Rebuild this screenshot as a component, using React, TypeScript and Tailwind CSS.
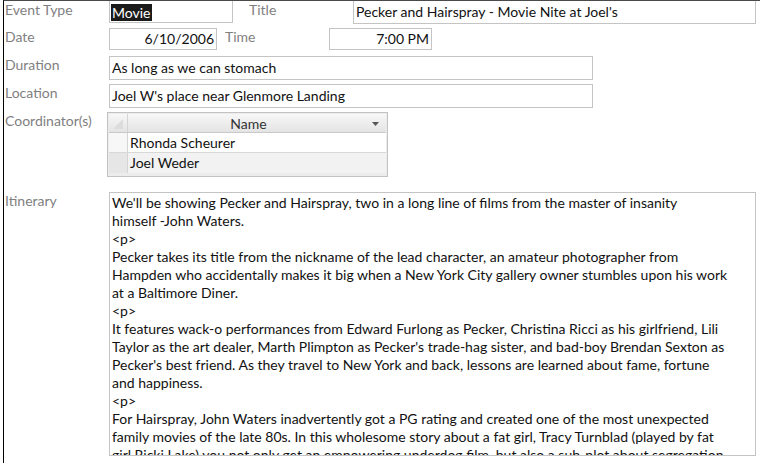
const itinerary = [
  "We'll be showing Pecker and Hairspray, two in a long line of films from the master of insanity",
  "himself -John Waters.",
  "<p>",
  "Pecker takes its title from the nickname of the lead character, an amateur photographer from",
  "Hampden who accidentally makes it big when a New York City gallery owner stumbles upon his work",
  "at a Baltimore Diner.",
  "<p>",
  "It features wack-o performances from Edward Furlong as Pecker, Christina Ricci as his girlfriend, Lili",
  "Taylor as the art dealer, Marth Plimpton as Pecker's trade-hag sister, and bad-boy Brendan Sexton as",
  "Pecker's best friend. As they travel to New York and back, lessons are learned about fame, fortune",
  "and happiness.",
  "<p>",
  "For Hairspray, John Waters inadvertently got a PG rating and created one of the most unexpected",
  "family movies of the late 80s. In this wholesome story about a fat girl, Tracy Turnblad (played by fat",
  "girl Ricki Lake) you not only get an empowering underdog film, but also a sub-plot about segregation",
];

function Label({ children, w = "w-[105px]" }: { children: React.ReactNode; w?: string }) {
  return <div className={`${w} shrink-0 pl-[1px] leading-[18px] text-[#7f7f7f]`}>{children}</div>;
}

export default function App() {
  return (
    <div
      className="h-[463px] w-[760px] overflow-hidden bg-white pl-[3px] text-[14px] text-[#111]"
      style={{ fontFamily: "Lato, 'Open Sans', sans-serif" }}
    >
      <div className="flex h-full flex-col border-l border-t border-l-black border-t-[#4a4a4a]">
        {/* event type / title */}
        <div className="flex h-[23px] items-start">
          <Label>Event Type</Label>
          <div className="h-[22px] w-[124px] border border-t-0 border-[#c4c4c4] px-[1px] pt-[1px]">
            <span className="bg-[#1b1b1b] px-[1px] leading-[18px] text-white">Movie</span>
          </div>
          <div className="w-[15px]" />
          <Label>Title</Label>
          <div className="h-[23px] w-[403px] border border-t-0 border-[#c4c4c4] px-[2px] pt-[1px] leading-[20px]">
            Pecker and Hairspray - Movie Nite at Joel's
          </div>
        </div>

        {/* date / time */}
        <div className="mt-[4px] flex h-[22px] items-start">
          <Label>Date</Label>
          <div className="h-[22px] w-[108px] border border-[#c4c4c4] px-[2px] text-right leading-[20px]">6/10/2006</div>
          <div className="w-[7px]" />
          <Label>Time</Label>
          <div className="h-[22px] w-[103px] border border-[#c4c4c4] px-[2px] text-right leading-[20px]">7:00 PM</div>
        </div>

        <div className="mt-[6px] flex h-[24px] items-start">
          <Label>Duration</Label>
          <div className="h-[24px] w-[484px] border border-[#c4c4c4] px-[2px] leading-[22px]">As long as we can stomach</div>
        </div>

        <div className="mt-[4px] flex h-[24px] items-start">
          <Label>Location</Label>
          <div className="h-[24px] w-[484px] border border-[#c4c4c4] px-[2px] leading-[22px]">
            Joel W's place near Glenmore Landing
          </div>
        </div>

        {/* coordinators datasheet */}
        <div className="mt-[4px] flex items-start">
          <Label w="w-[103px]">Coordinator(s)</Label>
          <div className="w-[281px] border border-[#c2c2c2] bg-[#ececec] p-[1px]">
            <div className="flex h-[19px] border-b border-[#c9c9c9] bg-gradient-to-b from-[#f7f7f7] to-[#e4e4e4] text-[#333]">
              <div className="relative w-[19px] border-r border-[#d4d4d4]">
                <svg width="12" height="12" className="absolute left-[3px] top-[4px]" viewBox="0 0 12 12">
                  <path d="M11 1 L11 11 L1 11 Z" fill="#dcdcdc" />
                </svg>
              </div>
              <div className="relative flex-1 pr-[17px] text-center leading-[19px]">
                Name
                <svg width="7" height="4" className="absolute right-[7px] top-[8px]" viewBox="0 0 7 4">
                  <path d="M0 0 H7 L3.5 4 Z" fill="#555" />
                </svg>
              </div>
            </div>
            <div className="flex h-[20px] border-b border-[#d8d8d8] bg-white">
              <div className="w-[19px] border-r border-[#d4d4d4] bg-[#f7f7f7]" />
              <div className="flex-1 pl-[2px] leading-[19px]">Rhonda Scheurer</div>
            </div>
            <div className="flex h-[20px] bg-[#f2f2f2]">
              <div className="w-[19px] border-r border-[#d4d4d4] bg-[#e6e6e6]" />
              <div className="flex-1 pl-[2px] leading-[19px]">Joel Weder</div>
            </div>
            <div className="h-[2px]" />
          </div>
        </div>

        {/* itinerary */}
        <div className="mt-[15px] flex items-start">
          <Label>Itinerary</Label>
          <div className="h-[264px] w-[647px] overflow-hidden border border-[#c4c4c4] px-[2px] pt-[1px]">
            {itinerary.map((line, i) => (
              <div key={i} className="whitespace-nowrap leading-[18px]">
                {line}
              </div>
            ))}
          </div>
        </div>
      </div>
    </div>
  );
}
